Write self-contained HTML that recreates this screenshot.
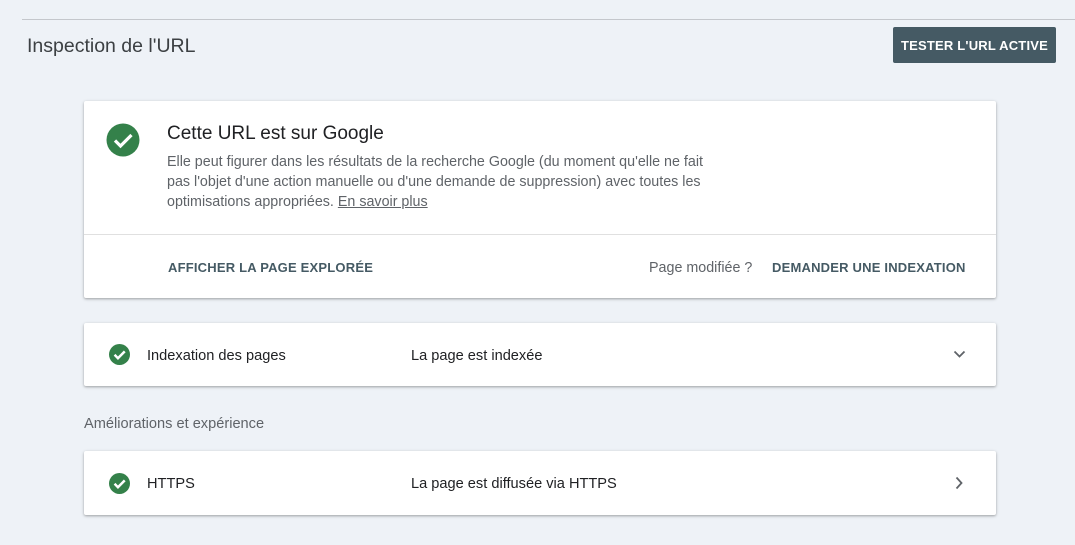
<!DOCTYPE html><html><head><style>
body{margin:0;width:1075px;height:545px;background:#eef2f7;font-family:"Liberation Sans",Arial,sans-serif;position:relative;overflow:hidden;color:#202124}
.line{position:absolute;left:22px;right:0;top:19px;height:1px;background:#c4c7cc}
h1{position:absolute;left:27px;top:35px;margin:0;font-weight:normal;font-size:19.5px;color:#3c4043}
.btn{position:absolute;left:893px;top:27px;width:163px;height:36px;background:#455a64;color:#fff;border-radius:2px;font-size:13px;font-weight:bold;letter-spacing:.2px;display:flex;align-items:center;justify-content:center}
.card{position:absolute;left:84px;width:912px;background:#fff;box-shadow:0 1px 2px rgba(0,0,0,.25),0 1px 4px rgba(0,0,0,.12);border-radius:2px}
.title{position:absolute;left:83px;top:22px;font-size:19px;color:#202124}
.desc{position:absolute;left:83px;top:51px;font-size:14.3px;line-height:20px;color:#5f6368;width:620px}
.desc u{color:#5f6368}
.div{position:absolute;left:0;right:0;top:133px;height:1px;background:#e0e0e0}
.act{position:absolute;top:159px;font-size:13px;font-weight:bold;color:#455a64;letter-spacing:.2px}
.row{font-size:14.6px;position:absolute;top:25px}
.sec{position:absolute;left:84px;top:416px;font-size:14.6px;color:#5f6368}
</style></head><body>
<div class="line"></div>
<h1>Inspection de l'URL</h1>
<div class="btn">TESTER L'URL ACTIVE</div>
<div class="card" style="top:101px;height:197px">
<svg style="position:absolute;left:22px;top:22px" width="34" height="34" viewBox="0 0 34 34"><circle cx="17" cy="17" r="16.5" fill="#34814a"/><path d="M9 17.5l5.5 5.5L25.5 12" stroke="#fff" stroke-width="3.2" fill="none"/></svg>
<div class="title">Cette URL est sur Google</div>
<div class="desc">Elle peut figurer dans les résultats de la recherche Google (du moment qu'elle ne fait<br>pas l'objet d'une action manuelle ou d'une demande de suppression) avec toutes les<br>optimisations appropriées. <u>En savoir plus</u></div>
<div class="div"></div>
<div class="act" style="left:84px">AFFICHER LA PAGE EXPLORÉE</div>
<div style="position:absolute;left:565px;top:159px;font-size:14.3px;color:#5f6368">Page modifiée ?</div>
<div class="act" style="left:688px">DEMANDER UNE INDEXATION</div>
</div>
<div class="card" style="top:323px;height:63px">
<svg style="position:absolute;left:25px;top:21px" width="21" height="21" viewBox="0 0 34 34"><circle cx="17" cy="17" r="17" fill="#34814a"/><path d="M9 17.5l5.5 5.5L25.5 12" stroke="#fff" stroke-width="4" fill="none"/></svg>
<div class="row" style="left:63px">Indexation des pages</div>
<div class="row" style="left:327px">La page est indexée</div>
<svg style="position:absolute;left:869px;top:27px" width="13" height="9" viewBox="0 0 13 9"><path d="M1.5 1.5l5 5 5-5" stroke="#5f6368" stroke-width="1.8" fill="none"/></svg>
</div>
<div class="sec">Améliorations et expérience</div>
<div class="card" style="top:451px;height:64px">
<svg style="position:absolute;left:25px;top:22px" width="21" height="21" viewBox="0 0 34 34"><circle cx="17" cy="17" r="17" fill="#34814a"/><path d="M9 17.5l5.5 5.5L25.5 12" stroke="#fff" stroke-width="4" fill="none"/></svg>
<div class="row" style="left:63px">HTTPS</div>
<div class="row" style="left:327px">La page est diffusée via HTTPS</div>
<svg style="position:absolute;left:871px;top:25px" width="9" height="14" viewBox="0 0 9 14"><path d="M1.5 1.5l5 5.5-5 5.5" stroke="#5f6368" stroke-width="1.8" fill="none"/></svg>
</div>
</body></html>
